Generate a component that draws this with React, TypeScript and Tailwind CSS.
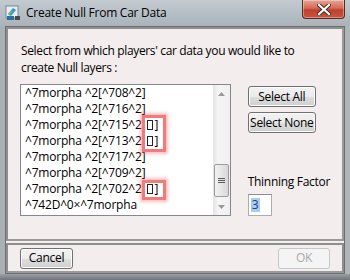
import React from "react";

const items: { text: string; glyph?: boolean }[] = [
  { text: "^7morpha ^2[^708^2]" },
  { text: "^7morpha ^2[^716^2]" },
  { text: "^7morpha ^2[^715^2]", glyph: true },
  { text: "^7morpha ^2[^713^2]", glyph: true },
  { text: "^7morpha ^2[^717^2]" },
  { text: "^7morpha ^2[^709^2]" },
  { text: "^7morpha ^2[^702^2]", glyph: true },
  { text: "^742D^0\u00D7^7morpha" },
];

function WinButton({ label, disabled, className }: { label: string; disabled?: boolean; className?: string }) {
  return (
    <div
      className={
        "flex items-center justify-center h-[21px] rounded-[3px] border text-[12px] leading-none whitespace-nowrap tracking-[-0.3px] " +
        (disabled
          ? "border-[#c4c8cb] bg-[#f4f4f4] text-[#a8a8a8] "
          : "border-[#707070] bg-[linear-gradient(#f2f2f2_0%,#ebebeb_50%,#dddddd_51%,#cfcfcf_100%)] text-black shadow-[inset_0_0_0_1px_#fcfcfc] ") +
        (className ?? "")
      }
    >
      {label}
    </div>
  );
}

function AppIcon() {
  return (
    <svg width="16" height="16" viewBox="0 0 16 16">
      <rect x="1" y="1" width="12" height="12" fill="#e8eef2" stroke="#7a8a96" />
      <path d="M3 9 L8 3 L11 5 L6 11 Z" fill="#3a8fd6" />
      <path d="M4 10 L7 6" stroke="#6bc04b" strokeWidth="2" />
      <rect x="2" y="11" width="7" height="4" fill="#2f6f9f" />
      <rect x="10" y="11" width="5" height="4" fill="#4a4a4a" />
    </svg>
  );
}

export default function App() {
  return (
    <div
      className="w-[350px] h-[280px] overflow-hidden flex flex-col bg-[linear-gradient(90deg,#a9b1b7,#b7bfc5_40%,#aeb6bc)] text-black"
      style={{ fontFamily: '"Open Sans", "Noto Sans", sans-serif' }}
    >
      {/* title bar */}
      <div className="h-[26px] flex items-start shrink-0 bg-[linear-gradient(180deg,#c3cbd1,#aab3ba)]">
        <div className="pt-[5px] pl-[5px]">
          <AppIcon />
        </div>
        <div className="pl-[5px] pt-[5px] text-[12px] leading-[16px] tracking-[-0.25px]">Create Null From Car Data</div>
        <div className="ml-auto mr-[5px] w-[43px] h-[19px] rounded-b-[4px] border border-t-0 border-[#5a2a24] bg-[linear-gradient(180deg,#e7a595_0%,#d46a57_45%,#c2402d_55%,#c5553f_100%)] flex items-center justify-center shadow-[inset_0_0_0_1px_rgba(255,255,255,0.35)]">
          <svg width="14" height="11" viewBox="0 0 14 11">
            <path d="M2 1 L12 10 M12 1 L2 10" stroke="#3a2a26" strokeWidth="4" strokeLinecap="square" />
            <path d="M2 1 L12 10 M12 1 L2 10" stroke="#ffffff" strokeWidth="2.2" strokeLinecap="square" />
          </svg>
        </div>
      </div>

      {/* client area */}
      <div className="mx-[5px] h-[248px] flex flex-col border border-[#6e6e6e] bg-[#f3eded] shrink-0">
        <div className="h-[214px] border-2 border-l-[#8e8e8e] border-t-[#8e8e8e] border-r-[#9a9a9a] border-b-[#9a9a9a] px-[12px] pt-[13px] flex flex-col">
          <div className="text-[12px] leading-[17px] tracking-[-0.35px] pl-[1px] whitespace-nowrap">
            Select from which players' car data you would like to
            <br />
            create Null layers :
          </div>
          <div className="flex mt-[8px]">
            {/* listbox */}
            <div className="relative w-[216px] h-[132px] border border-[#828790] bg-white flex">
              <div className="flex-1 pl-[4px] pt-[0px]">
                {items.map((it) => (
                  <div key={it.text} className="h-[16px] flex items-center text-[12px] leading-[16px] whitespace-nowrap tracking-[-0.2px]">
                    {it.text}
                    {it.glyph && (
                      <>
                        <span className="inline-block w-[6px] h-[10px] border border-[#222] ml-[2px] mr-[1px]" />
                        <span>]</span>
                      </>
                    )}
                  </div>
                ))}
              </div>
              {/* scrollbar */}
              <div className="w-[17px] h-full bg-[linear-gradient(90deg,#e3e3e3,#f5f5f5_30%,#f0f0f0)] flex flex-col items-center">
                <div className="h-[17px] flex items-center justify-center">
                  <svg width="7" height="4" viewBox="0 0 7 4">
                    <path d="M0 4 L3.5 0 L7 4 Z" fill="#9a9a9a" />
                  </svg>
                </div>
                <div className="flex-1 w-full flex flex-col justify-end pb-[1px]">
                  <div className="mx-[1px] h-[33px] rounded-[2px] border border-[#9c9c9c] bg-[linear-gradient(90deg,#f1f1f1,#e6e6e6_50%,#d7d7d7)] flex flex-col items-center justify-center gap-[1px]">
                    <div className="w-[7px] h-[1px] bg-[#5a5a5a]" />
                    <div className="w-[7px] h-[1px] bg-[#5a5a5a]" />
                    <div className="w-[7px] h-[1px] bg-[#5a5a5a]" />
                  </div>
                </div>
                <div className="h-[17px] flex items-center justify-center">
                  <svg width="7" height="4" viewBox="0 0 7 4">
                    <path d="M0 0 L3.5 4 L7 0 Z" fill="#9a9a9a" />
                  </svg>
                </div>
              </div>
              {/* highlight boxes */}
              <div className="absolute left-[121px] top-[30px] w-[24px] h-[37px] border-[3px] border-[#f27a7a] shadow-[0_0_3px_2px_rgba(240,110,110,0.45)]" />
              <div className="absolute left-[121px] top-[95px] w-[24px] h-[20px] border-[3px] border-[#f27a7a] shadow-[0_0_3px_2px_rgba(240,110,110,0.45)]" />
            </div>
            {/* right column */}
            <div className="ml-[17px] flex flex-col pt-[2px]">
              <WinButton label="Select All" className="w-[68px]" />
              <WinButton label="Select None" className="w-[68px] mt-[5px]" />
              <div className="mt-auto text-[12px] leading-[16px] tracking-[-0.3px] whitespace-nowrap">Thinning Factor</div>
              <div className="mt-[4px] w-[24px] h-[22px] border border-[#abadb3] border-t-[#8a8d94] bg-white flex items-center pl-[2px]">
                <span className="bg-[#a9cdf0] text-[#1d3f78] text-[12px] leading-[14px] px-[1px]">3</span>
              </div>
            </div>
          </div>
        </div>
        <div className="h-[2px] bg-[#f3eded]" />
        <div className="flex-1 border-2 border-[#8e8e8e] border-b-[#9a9a9a] flex items-center justify-between px-[12px]">
          <WinButton label="Cancel" className="w-[53px]" />
          <WinButton label="OK" disabled className="w-[52px]" />
        </div>
      </div>

      {/* bottom frame */}
      <div className="flex-1 bg-[linear-gradient(180deg,#9aa0a5,#6f757a)]" />
    </div>
  );
}
